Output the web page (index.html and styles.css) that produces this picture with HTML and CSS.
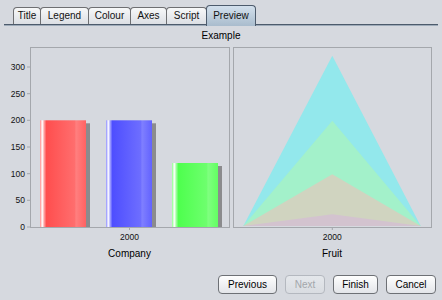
FILE: index.html
```html
<!DOCTYPE html>
<html>
<head>
    <meta charset="utf-8" />
    <title>Chart Wizard - Preview</title>
    <link rel="stylesheet" href="styles.css">
</head>
<body>
    <div class="tabbar">
        <div class="tab tab-title">Title</div>
        <div class="tab tab-legend">Legend</div>
        <div class="tab tab-colour">Colour</div>
        <div class="tab tab-axes">Axes</div>
        <div class="tab tab-script">Script</div>
        <div class="tab tab-preview selected">Preview</div>
    </div>

    <div class="chart-title">Example</div>

    <div class="charts">
        <div class="chart chart-left">
            <svg class="plot" width="231" height="196" viewBox="0 0 231 196">
                <defs>
                    <linearGradient id="gRed" x1="0" x2="1" y1="0" y2="0">
                        <stop offset="0" stop-color="#ff8c8c" />
                        <stop offset="0.05" stop-color="#ffffff" />
                        <stop offset="0.1" stop-color="#ff9090" />
                        <stop offset="0.14" stop-color="#ff4e4e" />
                        <stop offset="0.76" stop-color="#ff6e6e" />
                        <stop offset="0.78" stop-color="#ff8080" />
                        <stop offset="1" stop-color="#ff6262" />
                    </linearGradient>
                    <linearGradient id="gBlue" x1="0" x2="1" y1="0" y2="0">
                        <stop offset="0" stop-color="#8c8cff" />
                        <stop offset="0.05" stop-color="#ffffff" />
                        <stop offset="0.1" stop-color="#9090ff" />
                        <stop offset="0.14" stop-color="#4e4eff" />
                        <stop offset="0.76" stop-color="#6e6eff" />
                        <stop offset="0.78" stop-color="#8080ff" />
                        <stop offset="1" stop-color="#6262ff" />
                    </linearGradient>
                    <linearGradient id="gGreen" x1="0" x2="1" y1="0" y2="0">
                        <stop offset="0" stop-color="#8cff8c" />
                        <stop offset="0.05" stop-color="#ffffff" />
                        <stop offset="0.1" stop-color="#90ff90" />
                        <stop offset="0.14" stop-color="#4eff4e" />
                        <stop offset="0.76" stop-color="#6eff6e" />
                        <stop offset="0.78" stop-color="#80ff80" />
                        <stop offset="1" stop-color="#62ff62" />
                    </linearGradient>
                </defs>

                <g class="axis-labels" text-anchor="end">
                    <text x="25" y="24">300</text>
                    <text x="25" y="50.7">250</text>
                    <text x="25" y="77.3">200</text>
                    <text x="25" y="104">150</text>
                    <text x="25" y="130.7">100</text>
                    <text x="25" y="157.3">50</text>
                    <text x="25" y="184">0</text>
                </g>
                <g class="ticks">
                    <line x1="27" x2="30" y1="21" y2="21" />
                    <line x1="27" x2="30" y1="47.7" y2="47.7" />
                    <line x1="27" x2="30" y1="74.3" y2="74.3" />
                    <line x1="27" x2="30" y1="101" y2="101" />
                    <line x1="27" x2="30" y1="127.7" y2="127.7" />
                    <line x1="27" x2="30" y1="154.3" y2="154.3" />
                    <line x1="27" x2="30" y1="181" y2="181" />
                    <line x1="129.5" x2="129.5" y1="181" y2="184" />
                </g>

                <!-- shadows first, bars on top -->
                <rect class="shadow" x="44" y="77.3" width="46" height="103.7" />
                <rect class="shadow" x="110" y="77.3" width="46" height="103.7" />
                <rect class="shadow" x="176" y="120" width="46" height="61" />
                <rect x="40" y="74.3" width="46" height="106.7" fill="url(#gRed)" />
                <rect x="106" y="74.3" width="46" height="106.7" fill="url(#gBlue)" />
                <rect x="172" y="117" width="46" height="64" fill="url(#gGreen)" />

                <rect class="frame" x="30.5" y="1.5" width="199" height="180" />
                <text class="cat-label" x="129.5" y="194" text-anchor="middle">2000</text>
            </svg>
            <div class="caption">Company</div>
        </div>

        <div class="chart chart-right">
            <svg class="plot" width="211" height="196" viewBox="0 0 211 196">
                <polygon points="12.3,180 101.3,9.7 189.7,180" fill="#93e8ec" />
                <polygon points="12.3,180 101.3,74.7 189.7,180" fill="#a3f1ca" />
                <polygon points="12.3,180 101.3,128.3 189.7,180" fill="#d0d4c0" />
                <polygon points="12.3,180 101.3,168.3 189.7,180" fill="#d3c3cf" />

                <g class="ticks">
                    <line x1="101.3" x2="101.3" y1="181" y2="184" />
                </g>
                <rect class="frame" x="2.5" y="1.5" width="198" height="180" />
                <text class="cat-label" x="101.3" y="194" text-anchor="middle">2000</text>
            </svg>
            <div class="caption">Fruit</div>
        </div>
    </div>

    <div class="buttons">
        <button class="btn-previous">Previous</button>
        <button class="btn-next" disabled>Next</button>
        <button class="btn-finish">Finish</button>
        <button class="btn-cancel">Cancel</button>
    </div>
</body>
</html>
```

FILE: styles.css
```css
body {
    margin: 0;
    background-color: #d6d9df;
    font-family: "Liberation Sans", Arial, sans-serif;
    font-size: 10px;
    color: #000;
    width: 442px;
    height: 300px;
    overflow: hidden;
}

/* tab strip */
.tabbar {
    display: flex;
    align-items: flex-end;
    height: 24px;
    margin: 0 4px;
    padding-left: 9px;
    border-bottom: 1px solid #4d5b6c;
    box-shadow: 0 1px 0 #9eabb9;
}

.tab {
    position: relative;
    box-sizing: border-box;
    height: 17px;
    line-height: 16px;
    margin-left: -1px;
    border: 1px solid #6e6f72;
    border-bottom: none;
    border-radius: 4px 4px 0 0;
    background: linear-gradient(#f7f8f9, #dcdfe4);
    font-size: 10px;
    text-align: center;
    color: #111;
}

    .tab:first-child {
        margin-left: 0;
    }

    .tab.selected {
        height: 21px;
        line-height: 20px;
        margin-bottom: -2px;
        border-color: #4d5b6c;
        background: linear-gradient(#d3e0ec, #a9bccd);
        z-index: 1;
    }

.tab-title { width: 28px; }
.tab-legend { width: 49px; }
.tab-colour { width: 43px; }
.tab-axes { width: 37px; }
.tab-script { width: 41px; }
.tab-preview { width: 50px; }

.chart-title {
    margin-top: 1px;
    line-height: 20px;
    text-align: center;
}

/* charts */
.charts {
    display: flex;
}

.chart-left {
    width: 231px;
}

.chart-right {
    width: 211px;
}

.plot {
    display: block;
}

    .plot text {
        font-family: "Liberation Sans", Arial, sans-serif;
        font-size: 8.5px;
        fill: #111;
    }

.frame {
    fill: none;
    stroke: #a4a7ac;
    stroke-width: 1;
}

.ticks line {
    stroke: #a4a7ac;
    stroke-width: 1;
}

.shadow {
    fill: #8b8b8d;
}

.caption {
    line-height: 24px;
    text-align: center;
}

.chart-left .caption {
    margin-left: 30px;
    width: 199px;
}

.chart-right .caption {
    margin-left: 2px;
    width: 198px;
}

/* wizard buttons */
.buttons {
    display: flex;
    justify-content: flex-end;
    gap: 8px;
    margin-top: 9px;
    padding-right: 6px;
}

button {
    box-sizing: border-box;
    height: 19px;
    padding: 0;
    border: 1px solid #6d7075;
    border-radius: 4px;
    background: linear-gradient(#fefefe, #e3e5e9);
    font-family: "Liberation Sans", Arial, sans-serif;
    font-size: 10px;
    color: #000;
}

    button:disabled {
        border-color: #b4b8bf;
        background: linear-gradient(#e4e7eb, #d9dce1);
        color: #a3a6ab;
    }

.btn-previous { width: 59px; }
.btn-next { width: 40px; }
.btn-finish { width: 45px; }
.btn-cancel { width: 50px; }
```
